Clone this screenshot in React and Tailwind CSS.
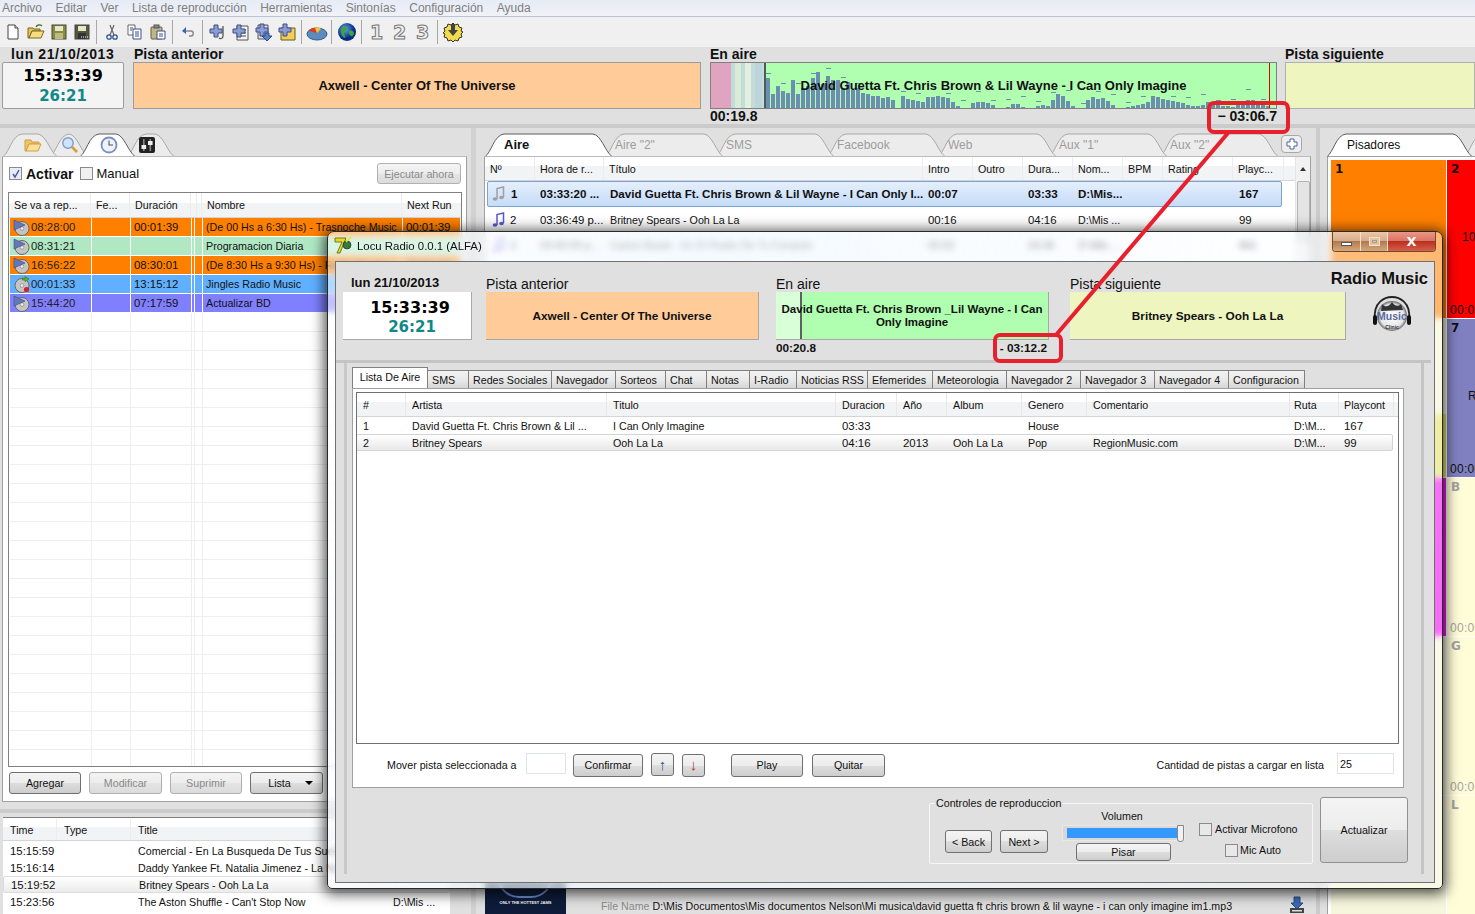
import React from "react";

const BTN = "rounded-[3px] border border-[#707070] bg-[linear-gradient(#f4f4f4_0%,#ececec_50%,#dedede_50%,#cdcdcd_100%)] flex items-center justify-center text-[#111] shrink-0";
const BTN_OFF = "rounded-[3px] border border-[#b0b0b0] bg-[linear-gradient(#f4f4f4_0%,#ececec_50%,#e4e4e4_50%,#dcdcdc_100%)] flex items-center justify-center text-[#8a8a8a] shrink-0";
const HEAD = "bg-[linear-gradient(#ffffff_0%,#ffffff_40%,#f1f3f5_40%,#f1f3f5_100%)] border-b border-[#d5d5d5]";
const NUM = "text-[11.4px]";

function CurveTab({ w, active, z, className = "", children }) {
  const d = `M0.5,23 C6,20 9,2 19,1 L${w - 19},1 C${w - 11},2 ${w - 7},18 ${w - 0.5},23`;
  return (
    <div className={`relative h-[23px] flex items-center shrink-0 ${className}`} style={{ zIndex: z }}>
      <svg className="absolute inset-0" width={w} height={24}>
        <path d={d} fill={active ? "#ffffff" : "#ececec"} stroke={active ? "#5c5c5c" : "#a8a8a8"} />
      </svg>
      <div className="relative flex items-center">{children}</div>
    </div>
  );
}

/* toolbar icons */
const S = ({ children, w = 18, h = 18, className = "" }) => (
  <svg width={w} height={h} viewBox={`0 0 ${w} ${h}`} className={className}>{children}</svg>
);
const IDoc = () => <S><path d="M4 2h7l3 3v11H4z" fill="#fff" stroke="#444" /><path d="M11 2v3h3" fill="#ddd" stroke="#444" /></S>;
const IOpen = () => <S><path d="M1 15V5h5l1 1h6v2H5L2 15z" fill="#e8c55a" stroke="#7a6520" /><path d="M2 15l3-7h12l-3 7z" fill="#f6dd80" stroke="#7a6520" /><path d="M9 4c1-2 4-3 6-1" fill="none" stroke="#3a7a2a" strokeWidth="1.3" /></S>;
const IFloppy = ({ dark }) => <S><rect x="2" y="2" width="14" height="14" fill={dark ? "#55563a" : "#8c8a3c"} stroke="#444" /><rect x="5" y="3" width="8" height="5" fill="#e6e6c8" /><rect x="5" y="10" width="8" height="6" fill={dark ? "#333" : "#bdbb80"} />{dark && <path d="M8 14h1M10 14h1M12 14h1M14 14h1" stroke="#fff" />}</S>;
const ICut = () => <S><path d="M7 2l4 10M11 2L7 12" stroke="#666" strokeWidth="1.2" /><circle cx="6" cy="14" r="2.2" fill="none" stroke="#34508f" strokeWidth="1.3" /><circle cx="12" cy="14" r="2.2" fill="none" stroke="#34508f" strokeWidth="1.3" /></S>;
const ICopy = () => <S><path d="M2 2h7v10H2z" fill="#fff" stroke="#666" /><path d="M7 6h8v10H7z" fill="#fff" stroke="#39508f" /><path d="M9 9h4M9 11h4M9 13h4M4 5h3M4 7h2" stroke="#39508f" /></S>;
const IPaste = () => <S><rect x="2" y="4" width="11" height="12" rx="1" fill="#c2b588" stroke="#665c38" /><rect x="5" y="2" width="5" height="3" fill="#888" stroke="#555" /><path d="M8 8h8v8H8z" fill="#fff" stroke="#39508f" /><path d="M10 11h4M10 13h4" stroke="#39508f" /></S>;
const IUndo = () => <S><path d="M4 8h8c3 0 3 5 0 5h-2" fill="none" stroke="#888" strokeWidth="1.4" /><path d="M7 4L3 8l4 3z" fill="#3c64b4" /></S>;
const Plus = () => <path d="M5 1h4v4h4v4H9v4H5V9H1V5h4z" fill="#8a9cd0" stroke="#3c4c88" />;
const IAdd1 = () => <S w={20}><g transform="translate(1,1)"><Plus /></g><path d="M15 3v10c0 3-3 3-4 2" fill="none" stroke="#555" strokeWidth="1.3" /></S>;
const IAdd2 = () => <S w={20}><path d="M6 3h11v14H6z" fill="#f4f4f4" stroke="#555" /><path d="M10 7h5M10 10h5M10 13h5" stroke="#444" /><g transform="translate(1,1)"><Plus /></g></S>;
const IAdd3 = () => <S w={20}><path d="M4 2h10v14H4z" fill="#dcdce4" stroke="#555" /><g transform="translate(1,0)"><Plus /></g><path d="M11 10h4v3h3l-5 5-5-5h3z" fill="#5a80c8" stroke="#2a4888" /></S>;
const IAdd4 = () => <S w={20}><path d="M4 5h14v12H4z" fill="#f4cf58" stroke="#6a5a20" /><g transform="translate(1,0)"><Plus /></g></S>;
const IPie = () => <S w={22}><ellipse cx="11" cy="11" rx="10" ry="6" fill="#5a8cc0" stroke="#355a80" /><path d="M11 10L3 8c1-3 6-4 8-3z" fill="#e03a20" /><path d="M11 10l-2-5c3-1 5 0 6 1z" fill="#e8c840" /></S>;
const IGlobe = () => <S w={20} h={20}><defs><radialGradient id="gl" cx="40%" cy="35%"><stop offset="0" stopColor="#5ea8f0" /><stop offset="1" stopColor="#0a2a80" /></radialGradient></defs><circle cx="10" cy="10" r="9" fill="url(#gl)" /><path d="M5 5c3-2 5 0 5 2s-3 2-3 4 2 3 1 5c-3-1-5-5-3-11zM12 9c2-1 5 0 5 2s-2 4-3 3-3-3-2-5z" fill="#3da83a" /></S>;
const Num = ({ t }) => <span className="[font-family:'DejaVu_Sans',sans-serif] font-bold text-[19px] leading-none text-[#f0f0f0] [-webkit-text-stroke:1px_#777]">{t}</span>;
const IGear = () => <S w={20} h={20}><path d="M10 1l2 2 3-1 1 3 3 1-1 3 2 1-2 2 1 3-3 1-1 3-3-1-2 2-2-2-3 1-1-3-3-1 1-3-2-1 2-2-1-3 3-1 1-3 3 1z" fill="#f2dc4c" stroke="#333" /><path d="M8 2h4v6h3l-5 6-5-6h3z" fill="#444" /></S>;

const Sep = () => <div className="w-[7px] h-[24px] flex justify-center shrink-0"><div className="w-px h-full bg-[#a8a8a8]" /></div>;
const TB = ({ children }) => <div className="w-[23px] h-[24px] flex items-center justify-center shrink-0">{children}</div>;

/* tab icons */
const IFolderTab = () => <S w={18} h={16}><path d="M1 14V3h6l1 2h7v2H5L2 14z" fill="#f0c466" stroke="#cfa040" /><path d="M2 14l3-7h12l-3 7z" fill="#fbdf9a" stroke="#cfa040" /></S>;
const IMag = () => <S w={18} h={18}><path d="M11 11l5 5" stroke="#d8a030" strokeWidth="2.6" /><circle cx="7" cy="7" r="5.2" fill="#cfe4fa" stroke="#7c9cc4" strokeWidth="1.4" /></S>;
const IClock = () => <S w={18} h={18}><circle cx="9" cy="9" r="7.5" fill="#eef2fa" stroke="#7a8fc0" strokeWidth="1.8" /><path d="M9 4.5V9h4" fill="none" stroke="#555" strokeWidth="1.1" /></S>;
const IMixer = () => <S w={18} h={18}><rect x="1" y="1" width="16" height="16" rx="2" fill="#222" /><rect x="5" y="3" width="1.6" height="12" fill="#888" /><rect x="11.5" y="3" width="1.6" height="12" fill="#888" /><rect x="3.5" y="9" width="4.6" height="4" fill="#eee" /><rect x="10" y="5" width="4.6" height="4" fill="#eee" /></S>;
const IDisc = ({ rec }) => (
  <svg width="17" height="17" viewBox="0 0 17 17" className="shrink-0">
    <circle cx="9" cy="9.5" r="7" fill="#c4c4c4" stroke="#666" />
    <circle cx="9" cy="9.5" r="1.8" fill="#efefef" stroke="#777" strokeWidth=".6" />
    {rec ? <><path d="M16 3l-4-2.5v1.6H9.5v2H12v1.6z" fill="#5ab030" stroke="#2a6a10" strokeWidth=".5" /><circle cx="13.5" cy="13.5" r="2.6" fill="#e01c30" /></> : <path d="M1 1l11 5-11 5z" fill="#6478b8" stroke="#3c4a80" strokeWidth=".6" />}
  </svg>
);
const INote = ({ c }) => <svg width="13" height="16" viewBox="0 0 13 16" className="shrink-0"><path d="M5 13V2.5l6.5-1.5v10" fill="none" stroke={c} strokeWidth="1.5" /><ellipse cx="3" cy="13" rx="2.3" ry="1.8" fill={c} /><ellipse cx="9.5" cy="11.5" rx="2.3" ry="1.8" fill={c} /></svg>;

function Waveform() {
  const bars = [30, 14, 22, 17, 15, 28, 14, 20, 22, 30, 36, 24, 32, 28, 28, 20, 26, 18, 20, 15, 14, 12, 12, 10, 11, 8, 0, 12, 9, 8, 7, 6, 11, 11, 12, 11, 10, 6, 2, 0, 0, 5, 6, 6, 5, 3, 0, 0, 1, 4, 4, 1, 0, 0, 2, 3, 2, 8, 14, 12, 7, 2, 0, 0, 8, 11, 9, 10, 7, 3, 0, 0, 1, 2, 3, 4, 6, 12, 11, 9, 8, 7, 6, 5, 3, 2, 2, 3, 6, 6, 3, 2, 2, 1, 4, 7, 8, 8, 7, 4, 2];
  return (
    <svg className="absolute inset-0" width="565" height="45" viewBox="0 0 565 45">
      <rect x="0" y="0" width="20" height="45" fill="#e0a4c0" />
      <rect x="20" y="0" width="33" height="45" fill="#c4dcd8" />
      <rect x="24" y="0" width="6" height="45" fill="#d8ecd8" />
      <rect x="34" y="0" width="6" height="45" fill="#e2f0e2" />
      <rect x="44" y="0" width="7" height="45" fill="#bcd4dc" />
      <rect x="53" y="0" width="2" height="45" fill="#4c5c5c" />
      {bars.map((h, i) => (
        <g key={i}>
          <rect x={55 + i * 5} y={45 - h} width="4" height={h} fill="#6c8fb0" />
          {i % 3 === 0 && h + 5 + ((i * 7) % 9) < 45 && <rect x={55 + i * 5} y={45 - h - 5 - ((i * 7) % 9)} width="5" height="1" fill="#6c8fb0" />}
        </g>
      ))}
      <rect x="558" y="0" width="1" height="45" fill="#e00000" />
    </svg>
  );
}

const schedule = [
  ["#ff8000", <IDisc />, "08:28:00", "00:01:39", "(De 00 Hs a 6:30 Hs) - Trasnoche Music", "00:01:39"],
  ["#b0e8c4", <IDisc />, "08:31:21", "", "Programacion Diaria", ""],
  ["#ff8000", <IDisc />, "16:56:22", "08:30:01", "(De 8:30 Hs a 9:30 Hs) - Radio Music", "00:01:39"],
  ["#60b0ff", <IDisc rec />, "00:01:33", "13:15:12", "Jingles Radio Music", ""],
  ["#8080ff", <IDisc />, "15:44:20", "07:17:59", "Actualizar BD", ""],
];
const SCOL = "grid grid-cols-[82px_39px_61px_3px_8px_200px_60px]";

function LeftColumn() {
  return (
    <div className="w-[471px] shrink-0 flex flex-col pt-[5px]">
      <div className="flex h-[23px] pl-[3px] relative">
        <CurveTab w={54} z={3} className="w-[54px] pl-[21px]"><IFolderTab /></CurveTab>
        <CurveTab w={38} z={2} className="w-[38px] -ml-[7px] pl-[11px]"><IMag /></CurveTab>
        <CurveTab w={55} z={5} active className="w-[55px] -ml-[8px] pl-[20px]"><IClock /></CurveTab>
        <CurveTab w={47} z={1} className="w-[47px] -ml-[8px] pl-[11px]"><IMixer /></CurveTab>
      </div>
      <div className="relative z-10 ml-[2px] w-[465px] h-[646px] bg-white border border-[#a0a0a0] border-t-[#bbb] flex flex-col">
        <div className="h-[35px] flex items-center pl-[6px] pr-[5px] pb-[2px] text-[#111]">
          <span className="w-[13px] h-[13px] border border-[#8a8a8a] bg-[#e8ecf8] flex items-center justify-center mr-[4px]">
            <svg width="10" height="10" viewBox="0 0 10 10"><path d="M2 5l2 3 4-7" fill="none" stroke="#4a5a9a" strokeWidth="1.5" /></svg>
          </span>
          <span className="text-[14px] font-bold">Activar</span>
          <span className="w-[13px] h-[13px] border border-[#8a8a8a] bg-[#f0f0f0] ml-[7px] mr-[3px]" />
          <span className="text-[13px]">Manual</span>
          <div className={`${BTN_OFF} ml-auto w-[84px] h-[21px]`}>Ejecutar ahora</div>
        </div>
        <div className="ml-[5px] w-[454px] h-[575px] border border-[#808080] overflow-hidden">
          <div className={`${SCOL} h-[25px] items-center pb-px ${HEAD}`}>
            {["Se va a rep...", "Fe...", "Duración", "", "", "Nombre", "Next Run"].map((t, i) => (
              <div key={i} className="h-full flex items-center pl-[5px] border-r border-[#ececec] truncate">{t}</div>
            ))}
          </div>
          {schedule.map((r, i) => (
            <div key={i} className={`${SCOL} h-[19px] mx-px border-b border-white`} style={{ background: r[0] }}>
              <div className="flex items-center border-r border-white pl-[3px]">{r[1]}<span className={`${NUM} ml-[1px] text-[#222]`}>{r[2]}</span></div>
              <div className="border-r border-white" />
              <div className={`${NUM} flex items-center pl-[3px] border-r border-white`}>{r[3]}</div>
              <div className="border-r border-white" />
              <div className="border-r border-white" />
              <div className="flex items-center pl-[3px] border-r border-white truncate whitespace-nowrap">{r[4]}</div>
              <div className={`${NUM} flex items-center pl-[3px]`}>{r[5]}</div>
            </div>
          ))}
          {Array.from({ length: 24 }).map((_, i) => (
            <div key={i} className={`${SCOL} h-[19px] mx-px border-b border-[#eeeeee]`}>
              {[0, 1, 2, 3, 4, 5].map(k => <div key={k} className="border-r border-[#eeeeee]" />)}
            </div>
          ))}
        </div>
        <div className="flex items-center pl-[6px] pt-[5px] gap-[8px]">
          <div className={`${BTN} w-[72px] h-[22px]`}>Agregar</div>
          <div className={`${BTN_OFF} w-[73px] h-[22px]`}>Modificar</div>
          <div className={`${BTN_OFF} w-[72px] h-[22px]`}>Suprimir</div>
          <div className={`${BTN} w-[73px] h-[22px] gap-[14px] pl-[8px]`}>Lista<span className="w-0 h-0 border-x-[4px] border-x-transparent border-t-[4px] border-t-black" /></div>
        </div>
      </div>
      <div className="h-[7px]" />
      <div className="h-[4px] bg-[#cbcbcb]" />
      <div className="h-[4px]" />
      <div className="ml-[3px] w-[447px] flex-1 bg-white border-t border-[#808080] overflow-hidden">
        <div className={`grid grid-cols-[54px_74px_259px_60px] h-[23px] pt-[1px] ${HEAD}`}>
          {["Time", "Type", "Title", ""].map((t, i) => <div key={i} className="flex items-center pl-[7px] border-r border-[#ececec]">{t}</div>)}
        </div>
        {[["15:15:59", "Comercial - En La Busqueda De Tus Sueños"], ["15:16:14", "Daddy Yankee Ft. Natalia Jimenez - La Noche De Los Dos"], ["15:19:52", "Britney Spears - Ooh La La"], ["15:23:56", "The Aston Shuffle - Can't Stop Now"]].map((r, i) => (
          <div key={i} className={`grid grid-cols-[54px_74px_259px_60px] h-[17px] items-center ${i === 0 ? "mt-[1px]" : ""} ${i === 2 ? "rounded-[2px] border border-[#dcdcdc] bg-[linear-gradient(#ffffff,#ebebeb)]" : ""}`}>
            <div className={`${NUM} pl-[7px]`}>{r[0]}</div>
            <div />
            <div className="pl-[7px] truncate whitespace-nowrap">{r[1]}</div>
            <div className="pl-[3px]">{i === 3 ? "D:\\Mis ..." : ""}</div>
          </div>
        ))}
      </div>
    </div>
  );
}

const CCOL = "grid grid-cols-[50px_69px_319px_50px_50px_50px_50px_40px_70px_51px]";
const CCOLR = "grid grid-cols-[48px_69px_319px_50px_50px_50px_50px_40px_70px_49px] w-[795px]";

function CenterColumn() {
  const tabs = ['Aire "2"', "SMS", "Facebook", "Web", 'Aux "1"', 'Aux "2"'];
  return (
    <div className="w-[840px] shrink-0 flex flex-col pt-[5px]">
      <div className="flex h-[23px] pl-[9px] relative text-[12px]">
        <CurveTab w={127} z={20} active className="w-[127px] pl-[19px]"><span className="font-bold text-[13px]">Aire</span></CurveTab>
        {tabs.map((t, i) => (
          <CurveTab key={t} w={118} z={19 - i} className="w-[118px] -ml-[7px] pl-[10px]"><span className="text-[#9c9c9c]">{t}</span></CurveTab>
        ))}
        <div className="relative ml-[3px] mt-[2px] w-[21px] h-[18px] border border-[#a8a8a8] rounded-[4px] bg-[#eeeeee] flex items-center justify-center">
          <svg width="12" height="12" viewBox="0 0 12 12"><path d="M4 1h4v3h3v4H8v3H4V8H1V4h3z" fill="#fff" stroke="#4c64a8" /></svg>
        </div>
      </div>
      <div className="relative z-30 ml-[8px] w-[827px] h-[724px] bg-white border border-[#a0a0a0] border-t-[#bbb] flex">
        <div className="w-[811px]">
          <div className={`${CCOL} h-[24px] ${HEAD}`}>
            {["Nº", "Hora de r...", "Título", "Intro", "Outro", "Dura...", "Nom...", "BPM", "Rating", "Playc..."].map((t, i) => (
              <div key={i} className="flex items-center pl-[5px] border-r border-[#ececec] whitespace-nowrap">{t}</div>
            ))}
          </div>
          <div className={`${CCOLR} ml-[2px] h-[26px] items-center font-bold text-[11.6px] text-[#111] border border-[#7da2ce] rounded-[2px] bg-[linear-gradient(#e4effd,#c6dcf8)]`}>
            <div className="flex items-center gap-[6px] pl-[4px]"><INote c="#a0a0a0" />1</div>
            <div className="pl-[4px] whitespace-nowrap">03:33:20 ...</div>
            <div className="pl-[5px] whitespace-nowrap overflow-hidden">David Guetta Ft. Chris Brown &amp; Lil Wayne - I Can Only I...</div>
            <div className="pl-[4px]">00:07</div><div />
            <div className="pl-[4px]">03:33</div>
            <div className="pl-[4px]">D:\Mis...</div><div /><div />
            <div className="pl-[5px]">167</div>
          </div>
          <div className={`${CCOLR} ml-[3px] h-[25px] items-center`}>
            <div className="flex items-center gap-[5px] pl-[4px]"><INote c="#5a5ac8" /><span className={NUM}>2</span></div>
            <div className={`${NUM} pl-[4px] whitespace-nowrap`}>03:36:49 p...</div>
            <div className="pl-[5px] whitespace-nowrap">Britney Spears - Ooh La La</div>
            <div className={`${NUM} pl-[4px]`}>00:16</div><div />
            <div className={`${NUM} pl-[4px]`}>04:16</div>
            <div className="pl-[4px]">D:\Mis ...</div><div /><div />
            <div className={`${NUM} pl-[5px]`}>99</div>
          </div>
          <div className={`${CCOLR} ml-[3px] h-[25px] items-center`}>
            <div className="flex items-center gap-[5px] pl-[4px]"><INote c="#5a5ac8" />3</div>
            <div className="pl-[4px] whitespace-nowrap">03:40:05 p...</div>
            <div className="pl-[5px] whitespace-nowrap">Carlos Baute - En El Ruido De Tu Corazón</div>
            <div className="pl-[4px]">00:02</div><div />
            <div className="pl-[4px]">03:36</div>
            <div className="pl-[4px]">D:\Mis ...</div><div /><div />
            <div className="pl-[5px]">661</div>
          </div>
        </div>
        <div className="w-[15px] border-l border-[#e4e4e4] bg-[#f2f2f2] flex flex-col items-center">
          <div className="h-[24px] flex items-center"><span className="w-0 h-0 border-x-[3px] border-x-transparent border-b-[4px] border-b-[#333]" /></div>
          <div className="w-[13px] h-[60px] border border-[#b4b4b4] rounded-[2px] bg-[#e4e4e4]" />
        </div>
      </div>
      <div className="flex-1 flex items-start pl-[9px] relative">
        <div className="w-[81px] h-full bg-[#0e1c3a] flex flex-col items-center justify-end overflow-hidden relative">
          <div className="absolute -top-[26px] left-[12px] w-[56px] h-[44px] rounded-full border-2 border-[#6f8fd0]" />
          <span className="relative text-[4px] text-white font-bold mb-[4px] whitespace-nowrap">ONLY THE HOTTEST JAMS</span>
        </div>
        <div className="ml-[35px] self-end h-[17px] flex items-center whitespace-nowrap text-[10.65px]">
          <span className="text-[#8a8a8a]">File Name</span>
          <span className="ml-[3px] text-[#111]">{"D:\\Mis Documentos\\Mis documentos Nelson\\Mi musica\\david guetta ft chris brown & lil wayne - i can only imagine im1.mp3"}</span>
        </div>
        <svg className="absolute left-[813px] bottom-0" width="16" height="18" viewBox="0 0 16 18"><path d="M5 1h6v6h3l-6 6-6-6h3z" fill="#3c68b4" stroke="#234a88" /><rect x="1" y="12" width="14" height="5" fill="#444" /><rect x="3" y="14" width="10" height="1.5" fill="#ddd" /></svg>
      </div>
    </div>
  );
}

const pads = [
  ["1", "#ff8000", "", "", true], ["2", "#ff0000", "10 Segundos", "00:00", true],
  ["6", "linear-gradient(#f4f4d4 60%,#e2e56a 60%)", "", "", true], ["7", "#8080c0", "R", "00:00", true],
  ["A", "#ef18ef", "", "", true], ["B", "#fffcd8", "", "00:00", false],
  ["F", "#f6f6dc", "", "", false], ["G", "#fffcd8", "", "00:00", false],
  ["K", "#f6f6dc", "", "", false], ["L", "#fffcd8", "", "", false],
];

function RightColumn() {
  return (
    <div className="flex-1 flex flex-col pt-[5px] overflow-hidden">
      <div className="flex h-[23px] pl-[7px] text-[12px]">
        <CurveTab w={145} z={3} active className="w-[145px] pl-[20px]">Pisadores</CurveTab>
        <CurveTab w={60} z={1} className="w-[60px] -ml-[8px]" />
      </div>
      <div className="ml-[7px] flex-1 bg-white border-l border-t border-[#a0a0a0] pl-[3px] pt-[3px] overflow-hidden">
        <div className="grid grid-cols-[115px_115px] auto-rows-[159px] w-[232px] gap-x-[1px]">
          {pads.map((p, i) => (
            <div key={i} className={`relative h-[158px] ${p[4] ? "text-[#111]" : "text-[#a4a4a4]"}`} style={{ background: p[1] }}>
              <span className="absolute left-[4px] top-[2px] font-bold text-[12px] [font-family:'DejaVu_Sans',sans-serif]">{p[0]}</span>
              {p[2] && <span className={`absolute top-[70px] text-[12px] whitespace-nowrap ${p[2] === "R" ? "left-[21px]" : "left-[15px]"}`}>{p[2]}</span>}
              {p[3] && <span className="absolute left-[3px] bottom-[1px] text-[12px] tracking-[0.3px]">{p[3]}</span>}
            </div>
          ))}
        </div>
      </div>
    </div>
  );
}

const INNER_TABS = [
  ["SMS", "w-[42px]"], ["Redes Sociales", "w-[84px]"], ["Navegador", "w-[65px]"], ["Sorteos", "w-[51px]"],
  ["Chat", "w-[42px]"], ["Notas", "w-[44px]"], ["I-Radio", "w-[48px]"], ["Noticias RSS", "w-[72px]"],
  ["Efemerides", "w-[66px]"], ["Meteorologia", "w-[75px]"], ["Navegador 2", "w-[75px]"], ["Navegador 3", "w-[75px]"],
  ["Navegador 4", "w-[75px]"], ["Configuracion", "w-[77px]"],
];
const LCOL = "grid grid-cols-[49px_201px_229px_61px_50px_75px_65px_203px_49px_55px]";

const Logo = () => (
  <svg width="40" height="40" viewBox="0 0 40 40">
    <defs>
      <radialGradient id="lg" cx="50%" cy="50%" r="55%"><stop offset="0" stopColor="#ffffff" /><stop offset=".72" stopColor="#e4e6ea" /><stop offset="1" stopColor="#2a2a2a" /></radialGradient>
    </defs>
    <circle cx="20" cy="20" r="15" fill="url(#lg)" />
    <path d="M3 23C1 6 13 1 20 1s19 5 17 22" fill="none" stroke="#222" strokeWidth="1.8" />
    <rect x="1" y="19" width="4" height="10" rx="2" fill="#111" />
    <rect x="35" y="19" width="4" height="10" rx="2" fill="#111" />
    <path d="M10 8c4 5 8 1 10-2 2 4 7 5 9 2l2 6-22 1z" fill="#333" />
    <text x="20" y="24" textAnchor="middle" fontSize="10.5" fontWeight="700" fill="#5a6a98" fontFamily="Liberation Sans">Music</text>
    <text x="20" y="33" textAnchor="middle" fontSize="5" fontWeight="700" fill="#333" fontFamily="Liberation Sans">Clinic</text>
  </svg>
);

const AppIcon = () => (
  <svg width="19" height="19" viewBox="0 0 19 19"><path d="M1 2h11L6 17H3l5-11H1z" fill="#e8d820" stroke="#5a5a10" strokeWidth=".8" /><circle cx="13" cy="9" r="4" fill="#3a7a3a" stroke="#123" strokeWidth=".6" /><path d="M12 6l5-5" stroke="#d8e820" strokeWidth="1.6" /></svg>
);

function Modal() {
  return (
    <div className="absolute z-40 left-[327px] top-[231px] w-[1116px] h-[658px] rounded-t-[7px] rounded-b-[5px] border border-[#2a2a2a] shadow-[0_2px_13px_3px_rgba(0,0,0,0.68)] backdrop-blur-[3px] bg-[linear-gradient(100deg,rgba(255,255,255,0.5),rgba(240,248,255,0.72)_30%,rgba(255,255,255,0.45)_90%,rgba(255,255,255,0.3))] flex flex-col">
      <div className="h-[29px] flex items-center pl-[6px] pb-[2px] shrink-0">
        <AppIcon />
        <span className="ml-[4px] text-[11.4px] text-[#111]">Locu Radio 0.0.1 (ALFA)</span>
      </div>
      <div className="absolute right-[6px] top-0 h-[20px] flex rounded-b-[4px] border border-t-0 border-[#6e4a30] overflow-hidden">
        <div className="w-[28px] bg-[linear-gradient(#e8c8a8_0%,#d8aa88_50%,#b07a50_50%,#d8a878_100%)] border-r border-[#f4e0d0] flex items-center justify-center"><span className="w-[11px] h-[4px] mt-[5px] bg-white border border-[#555]" /></div>
        <div className="w-[27px] bg-[linear-gradient(#e8c8a8_0%,#d8aa88_50%,#b07a50_50%,#d8a878_100%)] border-r border-[#f4e0d0] flex items-center justify-center"><span className="w-[11px] h-[9px] bg-[#e0c4a8] border border-[#f0e0d0] flex items-center justify-center"><span className="w-[5px] h-[3px] border border-[#b89878]" /></span></div>
        <div className="w-[47px] bg-[linear-gradient(#e89888_0%,#dc7060_50%,#b83020_50%,#d86048_100%)] flex items-center justify-center text-white font-bold text-[13px] leading-none [font-family:'DejaVu_Sans',sans-serif]">X</div>
      </div>
      <div className="relative mx-[7px] flex-1 mb-[5px] bg-[#e0e0e0] border border-[#707070] flex flex-col text-[#111]">
        <div className="h-[98px] flex items-start pl-[7px] pt-[14px] shrink-0">
          <div className="w-[129px] shrink-0">
            <div className="h-[16px] pl-[8px] text-[13px] font-bold leading-[14px]">lun 21/10/2013</div>
            <div className="h-[48px] bg-white border-b border-r border-[#a8a8a8] flex flex-col items-center pl-[6px] [font-family:'DejaVu_Sans',sans-serif] font-bold">
              <div className="text-[16px] leading-[20px] mt-[6px] text-black">15:33:39</div>
              <div className="text-[15px] leading-[18px] ml-[4px] text-[#118888]">26:21</div>
            </div>
          </div>
          <div className="w-[273px] ml-[14px] shrink-0">
            <div className="h-[16px] text-[14px] leading-[16px]">Pista anterior</div>
            <div className="h-[48px] bg-[#ffcc99] border-b border-r border-[#a8a8a8] flex items-center justify-center font-bold text-[11.8px]">Axwell - Center Of The Universe</div>
          </div>
          <div className="w-[273px] ml-[17px] shrink-0">
            <div className="h-[16px] text-[14px] leading-[16px]">En aire</div>
            <div className="relative h-[48px] bg-[linear-gradient(90deg,#d8ffd8_0,#d8ffd8_24px,#606060_24px,#606060_26px,#b0ffb0_26px)] border-b border-r border-[#a8a8a8] flex items-center justify-center text-center font-bold text-[11.5px] leading-[13px] px-[3px]">David Guetta Ft. Chris Brown _Lil Wayne - I Can Only Imagine</div>
            <div className="flex justify-between pr-[2px] mt-[1px] h-[14px] font-bold text-[11.8px] leading-[14px]"><span>00:20.8</span><span>- 03:12.2</span></div>
          </div>
          <div className="w-[276px] ml-[21px] shrink-0">
            <div className="h-[16px] text-[14px] leading-[16px]">Pista siguiente</div>
            <div className="h-[48px] bg-[#eef5bf] border-b border-r border-[#a8a8a8] flex items-center justify-center font-bold text-[11.8px]">Britney Spears - Ooh La La</div>
          </div>
          <div className="flex-1 -ml-[40px] -mt-[8px] flex flex-col items-end pr-[6px]">
            <div className="text-[16.5px] font-bold leading-[20px] whitespace-nowrap">Radio Music</div>
            <div className="mr-[16px] mt-[8px]"><Logo /></div>
          </div>
        </div>
        <div className="h-[3px] bg-[#c4c4c4] shrink-0 mr-[3px]" />
        <div className="flex-1 flex">
          <div className="w-[8px]" />
          <div className="w-[3px] h-[511px] bg-[#c8c8c8]" />
          <div className="w-[1052px] ml-[5px] pt-[5px]">
            <div className="flex h-[20px] items-end">
              <div className="relative z-10 w-[76px] h-[21px] bg-white border border-b-0 border-[#808080] flex items-center justify-center pb-[2px]">Lista De Aire</div>
              {INNER_TABS.map(([t, w]) => (
                <div key={t} className={`${w} h-[18px] border border-b-0 border-[#808080] -ml-px flex items-center pl-[4px] bg-[linear-gradient(#f2f2f2_0%,#eaeaea_50%,#d6d6d6_100%)] whitespace-nowrap`}>{t}</div>
              ))}
            </div>
            <div className="h-[400px] bg-white border border-[#a0a0a0] pt-[3px] pl-[3px] flex flex-col">
              <div className="h-[352px] w-[1043px] border border-[#707070] overflow-hidden shrink-0">
                <div className={`${LCOL} h-[24px] ${HEAD}`}>
                  {["#", "Artista", "Titulo", "Duracion", "Año", "Album", "Genero", "Comentario", "Ruta", "Playcont"].map((t, i) => (
                    <div key={t} className={`flex items-center border-r border-[#e8e8e8] ${i === 8 ? "pl-[4px]" : i === 9 ? "pl-[5px]" : "pl-[6px]"}`}>{t}</div>
                  ))}
                </div>
                <div className={`${LCOL} h-[17px] items-center`}>
                  <div className="pl-[6px]">1</div>
                  <div className="pl-[6px] whitespace-nowrap">David Guetta Ft. Chris Brown &amp; Lil ...</div>
                  <div className="pl-[6px]">I Can Only Imagine</div>
                  <div className={`${NUM} pl-[6px]`}>03:33</div><div /><div />
                  <div className="pl-[6px]">House</div><div />
                  <div className="pl-[4px] whitespace-nowrap">D:\M...</div>
                  <div className={`${NUM} pl-[5px]`}>167</div>
                </div>
                <div className={`${LCOL} h-[17px] items-center rounded-[2px] border border-[#d4d4d4] bg-[linear-gradient(#ffffff,#e8e8e8)] -ml-px w-[1037px]`}>
                  <div className="pl-[6px]">2</div>
                  <div className="pl-[6px]">Britney Spears</div>
                  <div className="pl-[6px]">Ooh La La</div>
                  <div className={`${NUM} pl-[6px]`}>04:16</div>
                  <div className={`${NUM} pl-[6px]`}>2013</div>
                  <div className="pl-[6px]">Ooh La La</div>
                  <div className="pl-[6px]">Pop</div>
                  <div className="pl-[6px]">RegionMusic.com</div>
                  <div className="pl-[4px] whitespace-nowrap">D:\M...</div>
                  <div className={`${NUM} pl-[5px]`}>99</div>
                </div>
              </div>
              <div className="flex items-center h-[24px] mt-[9px] pr-[9px]">
                <span className="ml-[31px] whitespace-nowrap w-[129px]">Mover pista seleccionada a</span>
                <div className="ml-[10px] w-[40px] h-[21px] -mt-[3px] bg-white border border-[#dfe3ee]" />
                <div className={`${BTN} ml-[7px] w-[70px] h-[23px]`}>Confirmar</div>
                <div className={`${BTN} ml-[8px] w-[23px] h-[23px] -mt-[1px] text-[#3050a0] text-[15px]`}>↑</div>
                <div className={`${BTN} ml-[8px] w-[23px] h-[23px] text-[#c03020] text-[15px]`}>↓</div>
                <div className={`${BTN} ml-[26px] w-[72px] h-[23px]`}>Play</div>
                <div className={`${BTN} ml-[9px] w-[73px] h-[23px]`}>Quitar</div>
                <span className="ml-auto whitespace-nowrap">Cantidad de pistas a cargar en lista</span>
                <div className="ml-[13px] w-[57px] h-[21px] -mt-[3px] bg-white border border-[#dfe3ee] flex items-center pl-[2px]">25</div>
              </div>
            </div>
            <div className="flex items-start mt-[9px]">
              <div className="relative ml-[577px] mt-[6px] w-[384px] h-[61px] border border-[#f6f6f6] rounded-[2px] flex shrink-0">
                <span className="absolute left-[5px] -top-[8px] bg-[#e0e0e0] px-px leading-[14px] whitespace-nowrap">Controles de reproduccion</span>
                <div className={`${BTN} ml-[15px] mt-[26px] w-[47px] h-[23px]`}>&lt; Back</div>
                <div className={`${BTN} ml-[8px] mt-[26px] w-[48px] h-[23px]`}>Next &gt;</div>
                <div className="ml-[14px] w-[123px] flex flex-col items-center shrink-0">
                  <div className="h-[21px] pt-[5px] leading-[14px] -ml-[3px]">Volumen</div>
                  <div className="relative w-[123px] h-[16px] border border-[#e8e8e8] bg-[#d8d8d8] flex items-center pl-[4px]">
                    <div className="w-[111px] h-[10px] bg-[#3399ff]" />
                    <div className="absolute left-[114px] -top-px w-[7px] h-[17px] rounded-b-[3px] border border-[#888] bg-[#f2f2f2]" />
                  </div>
                  <div className={`${BTN} w-[95px] h-[18px] mt-[2px]`}>Pisar</div>
                </div>
                <div className="ml-[14px] flex flex-col">
                  <div className="flex items-center h-[14px] mt-[18px] whitespace-nowrap"><span className="w-[13px] h-[13px] border border-[#8a8a8a] bg-[#e8e8e8] mr-[3px]" />Activar Microfono</div>
                  <div className="flex items-center h-[14px] mt-[7px] ml-[26px] whitespace-nowrap"><span className="w-[13px] h-[13px] border border-[#8a8a8a] bg-[#e8e8e8] mr-[2px]" />Mic Auto</div>
                </div>
              </div>
              <div className={`${BTN} ml-[7px] w-[88px] h-[66px] border-[#909090]`}>Actualizar</div>
            </div>
          </div>
          <div className="ml-[17px] w-[3px] h-[511px] bg-[#c4c4c4]" />
        </div>
      </div>
    </div>
  );
}

export default function App() {
  return (
    <div className="relative w-[1475px] h-[914px] overflow-hidden bg-[#e0e0e0] text-[10.7px] leading-[14px] text-[#111] [font-family:'Liberation_Sans',Arial,sans-serif]">
      <div className="h-[17px] flex items-center gap-[13.5px] pl-[2px] text-[#7f7f7f] text-[12px] bg-[linear-gradient(#e6ebf5,#f0f2f8)] border-b border-[#b8c4d8]">
        {["Archivo", "Editar", "Ver", "Lista de reproducción", "Herramientas", "Sintonías", "Configuración", "Ayuda"].map(m => <span key={m}>{m}</span>)}
      </div>
      <div className="h-[30px] flex items-center pl-px bg-[#f0f0f0]">
        <TB><IDoc /></TB><TB><IOpen /></TB><TB><IFloppy /></TB><TB><IFloppy dark /></TB><Sep />
        <TB><ICut /></TB><TB><ICopy /></TB><TB><IPaste /></TB><Sep />
        <TB><IUndo /></TB><Sep />
        <TB><IAdd1 /></TB><TB><IAdd2 /></TB><TB><IAdd3 /></TB><TB><IAdd4 /></TB><Sep />
        <TB><IPie /></TB><Sep />
        <TB><IGlobe /></TB><Sep />
        <TB><Num t="1" /></TB><TB><Num t="2" /></TB><TB><Num t="3" /></TB><Sep />
        <TB><IGear /></TB>
      </div>
      <div className="h-[77px] flex pl-[2px] bg-[#e0e0e0]">
        <div className="w-[122px] shrink-0">
          <div className="h-[15px] pl-[9px] text-[14px] tracking-[0.6px] font-bold leading-[15px] whitespace-nowrap">lun 21/10/2013</div>
          <div className="h-[47px] rounded-[2px] border border-[#9c9c9c] bg-[#f4f4f4] flex flex-col items-center [font-family:'DejaVu_Sans',sans-serif] font-bold">
            <div className="text-[16px] leading-[20px] mt-[3px] text-black">15:33:39</div>
            <div className="text-[15px] leading-[20px] text-[#118888]">26:21</div>
          </div>
        </div>
        <div className="w-[568px] ml-[9px] shrink-0">
          <div className="h-[15px] pl-px text-[14px] font-bold leading-[15px]">Pista anterior</div>
          <div className="h-[47px] border border-[#9c9c9c] bg-[#ffcc99] flex items-center justify-center font-bold text-[13px]">Axwell - Center Of The Universe</div>
        </div>
        <div className="w-[567px] ml-[9px] shrink-0">
          <div className="h-[15px] text-[14px] font-bold leading-[15px]">En aire</div>
          <div className="relative h-[47px] border border-[#808080] bg-[#b0ffb0] overflow-hidden flex items-center justify-center">
            <Waveform />
            <span className="relative font-bold text-[13px] whitespace-nowrap">David Guetta Ft. Chris Brown &amp; Lil Wayne - I Can Only Imagine</span>
          </div>
          <div className="flex justify-between h-[15px] font-bold text-[14px] leading-[15px]"><span>00:19.8</span><span>− 03:06.7</span></div>
        </div>
        <div className="flex-1 ml-[8px]">
          <div className="h-[15px] text-[14px] font-bold leading-[15px]">Pista siguiente</div>
          <div className="h-[47px] border border-[#b0b0b0] bg-[#eef5bf]" />
        </div>
      </div>
      <div className="h-[4px] bg-[#cbcbcb]" />
      <div className="h-[786px] flex">
        <LeftColumn />
        <div className="w-[5px] shrink-0 bg-[#d2d2d2]" />
        <CenterColumn />
        <div className="w-[4px] shrink-0 bg-[#cbcbcb]" />
        <RightColumn />
      </div>
      <Modal />
      <svg className="absolute inset-0 z-50 pointer-events-none" width="1475" height="914">
        <rect x="1209" y="103" width="79" height="29" rx="5" fill="none" stroke="#e8202c" strokeWidth="4" />
        <rect x="995" y="335" width="66" height="26" rx="5" fill="none" stroke="#e8202c" strokeWidth="4" />
        <path d="M1228 133L1056 335" stroke="#e8202c" strokeWidth="4" />
      </svg>
    </div>
  );
}
